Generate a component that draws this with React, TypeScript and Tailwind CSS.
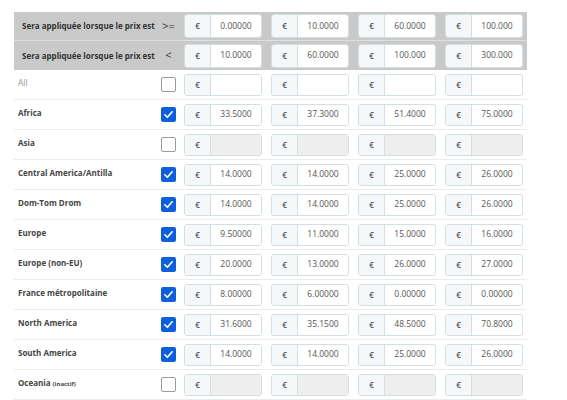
import React from "react";

type Row = {
  label: string;
  suffix?: string;
  bold: boolean;
  checked: boolean;
  disabled: boolean;
  values: string[];
};

const rows: Row[] = [
  { label: "All", bold: false, checked: false, disabled: false, values: ["", "", "", ""] },
  { label: "Africa", bold: true, checked: true, disabled: false, values: ["33.5000", "37.3000", "51.4000", "75.0000"] },
  { label: "Asia", bold: true, checked: false, disabled: true, values: ["", "", "", ""] },
  { label: "Central America/Antilla", bold: true, checked: true, disabled: false, values: ["14.0000", "14.0000", "25.0000", "26.0000"] },
  { label: "Dom-Tom Drom", bold: true, checked: true, disabled: false, values: ["14.0000", "14.0000", "25.0000", "26.0000"] },
  { label: "Europe", bold: true, checked: true, disabled: false, values: ["9.50000", "11.0000", "15.0000", "16.0000"] },
  { label: "Europe (non-EU)", bold: true, checked: true, disabled: false, values: ["20.0000", "13.0000", "26.0000", "27.0000"] },
  { label: "France métropolitaine", bold: true, checked: true, disabled: false, values: ["8.00000", "6.00000", "0.00000", "0.00000"] },
  { label: "North America", bold: true, checked: true, disabled: false, values: ["31.6000", "35.1500", "48.5000", "70.8000"] },
  { label: "South America", bold: true, checked: true, disabled: false, values: ["14.0000", "14.0000", "25.0000", "26.0000"] },
  { label: "Oceania", suffix: "(inactif)", bold: true, checked: false, disabled: true, values: ["", "", "", ""] },
];

function Group({ value, disabled, tall }: { value: string; disabled?: boolean; tall?: boolean }) {
  return (
    <div
      className={`flex w-[78px] ${tall ? "h-[24px]" : "h-[22px]"} rounded-[3px] border border-[#d3dfe3] overflow-hidden`}
    >
      <div className="w-[26px] flex items-center justify-center bg-[#f5f7f8] border-r border-[#d3dfe3] text-[8px] font-semibold text-[#555]">
        €
      </div>
      <div
        className={`flex-1 flex items-center justify-center text-[8.5px] text-[#555] ${
          disabled ? "bg-[#eeeeee]" : "bg-white"
        }`}
      >
        {value}
      </div>
    </div>
  );
}

function Check({ checked }: { checked: boolean }) {
  if (checked) {
    return (
      <div className="w-[15px] h-[15px] rounded-[2px] bg-[#0d5fdc] flex items-center justify-center">
        <svg width="11" height="11" viewBox="0 0 12 12">
          <path d="M2 6.3 L4.8 9 L10 3" fill="none" stroke="white" strokeWidth="1.8" strokeLinecap="round" strokeLinejoin="round" />
        </svg>
      </div>
    );
  }
  return <div className="w-[15px] h-[15px] rounded-[2px] border border-[#9a9a9a] bg-white" />;
}

export default function App() {
  return (
    <div className="w-[567px] h-[400px] bg-white overflow-hidden" style={{ fontFamily: "'Open Sans', 'Noto Sans', sans-serif" }}>
      <div className="ml-[14px] mt-[12px] w-[513px]">
        <div className="bg-[#c9c9c9]">
          {[
            { op: ">=", values: ["0.00000", "10.0000", "60.0000", "100.000"] },
            { op: "<", values: ["10.0000", "60.0000", "100.000", "300.000"] },
          ].map((h, i) => (
            <div
              key={i}
              className={`flex items-center h-[29px] ${i === 0 ? "border-b border-[#dedede]" : ""}`}
            >
              <div className="w-[147px] pl-[8px] text-[8px] font-bold text-[#333] whitespace-nowrap">
                Sera appliquée lorsque le prix est
              </div>
              <div className="w-[15px] text-[11px] text-[#333] flex justify-center">{h.op}</div>
              <div className="flex gap-[9px] ml-[8px]">
                {h.values.map((v, j) => (
                  <Group key={j} value={v} tall />
                ))}
              </div>
            </div>
          ))}
        </div>
        {rows.map((r, i) => (
          <div key={i} className="flex items-center h-[30px] border-b border-[#ececec]">
            <div
              className={`w-[147px] pl-[4px] pb-[3px] whitespace-nowrap ${
                r.bold ? "font-bold text-[#444] text-[8px]" : "text-[#999] text-[8.5px]"
              }`}
            >
              {r.label}
              {r.suffix && <span className="text-[6px] ml-[2px]">{r.suffix}</span>}
            </div>
            <Check checked={r.checked} />
            <div className="flex gap-[9px] ml-[8px]">
              {r.values.map((v, j) => (
                <Group key={j} value={v} disabled={r.disabled} />
              ))}
            </div>
          </div>
        ))}
      </div>
    </div>
  );
}
